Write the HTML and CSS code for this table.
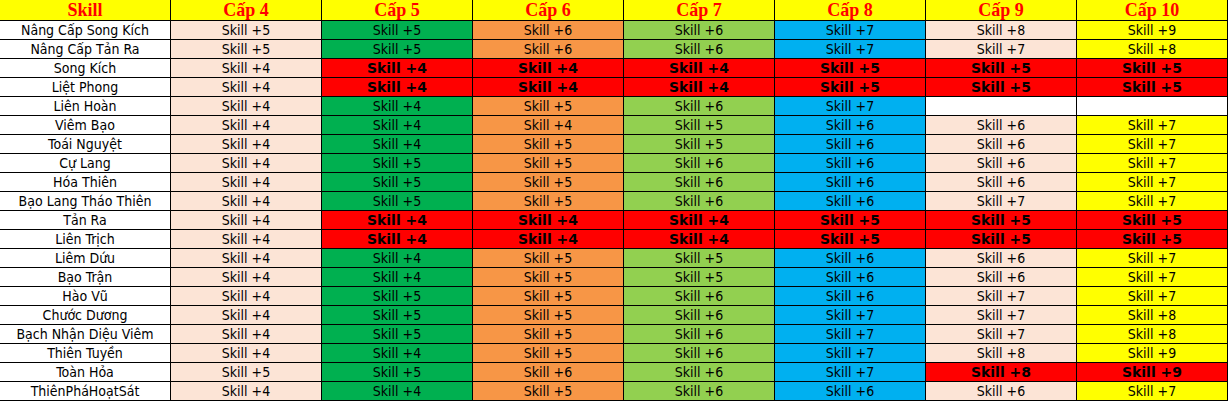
FILE: index.html
```html
<!DOCTYPE html>
<html lang="vi">
<head>
<meta charset="utf-8">
<title>Skill</title>
<link rel="stylesheet" href="styles.css">
</head>
<body>
<div class="sheet">
  <div class="hd">Skill</div><div class="hd">Cấp 4</div><div class="hd">Cấp 5</div><div class="hd">Cấp 6</div><div class="hd">Cấp 7</div><div class="hd">Cấp 8</div><div class="hd">Cấp 9</div><div class="hd">Cấp 10</div>

  <div class="nm">Nâng Cấp Song Kích</div><div class="c c4">Skill +5</div><div class="c c5">Skill +5</div><div class="c c6">Skill +6</div><div class="c c7">Skill +6</div><div class="c c8">Skill +7</div><div class="c c9">Skill +8</div><div class="c c10">Skill +9</div>
  <div class="nm">Nâng Cấp Tản Ra</div><div class="c c4">Skill +5</div><div class="c c5">Skill +5</div><div class="c c6">Skill +6</div><div class="c c7">Skill +6</div><div class="c c8">Skill +7</div><div class="c c9">Skill +7</div><div class="c c10">Skill +8</div>
  <div class="nm">Song Kích</div><div class="c c4">Skill +4</div><div class="c hot">Skill +4</div><div class="c hot">Skill +4</div><div class="c hot">Skill +4</div><div class="c hot">Skill +5</div><div class="c hot">Skill +5</div><div class="c hot">Skill +5</div>
  <div class="nm">Liệt Phong</div><div class="c c4">Skill +4</div><div class="c hot">Skill +4</div><div class="c hot">Skill +4</div><div class="c hot">Skill +4</div><div class="c hot">Skill +5</div><div class="c hot">Skill +5</div><div class="c hot">Skill +5</div>
  <div class="nm">Liên Hoàn</div><div class="c c4">Skill +4</div><div class="c c5">Skill +4</div><div class="c c6">Skill +5</div><div class="c c7">Skill +6</div><div class="c c8">Skill +7</div><div class="c blank"></div><div class="c blank"></div>
  <div class="nm">Viêm Bạo</div><div class="c c4">Skill +4</div><div class="c c5">Skill +4</div><div class="c c6">Skill +4</div><div class="c c7">Skill +5</div><div class="c c8">Skill +6</div><div class="c c9">Skill +6</div><div class="c c10">Skill +7</div>
  <div class="nm">Toái Nguyệt</div><div class="c c4">Skill +4</div><div class="c c5">Skill +4</div><div class="c c6">Skill +5</div><div class="c c7">Skill +5</div><div class="c c8">Skill +6</div><div class="c c9">Skill +6</div><div class="c c10">Skill +7</div>
  <div class="nm">Cự Lang</div><div class="c c4">Skill +4</div><div class="c c5">Skill +5</div><div class="c c6">Skill +5</div><div class="c c7">Skill +6</div><div class="c c8">Skill +6</div><div class="c c9">Skill +6</div><div class="c c10">Skill +7</div>
  <div class="nm">Hóa Thiên</div><div class="c c4">Skill +4</div><div class="c c5">Skill +5</div><div class="c c6">Skill +5</div><div class="c c7">Skill +6</div><div class="c c8">Skill +6</div><div class="c c9">Skill +6</div><div class="c c10">Skill +7</div>
  <div class="nm">Bạo Lang Tháo Thiên</div><div class="c c4">Skill +4</div><div class="c c5">Skill +5</div><div class="c c6">Skill +5</div><div class="c c7">Skill +6</div><div class="c c8">Skill +6</div><div class="c c9">Skill +7</div><div class="c c10">Skill +7</div>
  <div class="nm">Tản Ra</div><div class="c c4">Skill +4</div><div class="c hot">Skill +4</div><div class="c hot">Skill +4</div><div class="c hot">Skill +4</div><div class="c hot">Skill +5</div><div class="c hot">Skill +5</div><div class="c hot">Skill +5</div>
  <div class="nm">Liên Trịch</div><div class="c c4">Skill +4</div><div class="c hot">Skill +4</div><div class="c hot">Skill +4</div><div class="c hot">Skill +4</div><div class="c hot">Skill +5</div><div class="c hot">Skill +5</div><div class="c hot">Skill +5</div>
  <div class="nm">Liêm Dứu</div><div class="c c4">Skill +4</div><div class="c c5">Skill +4</div><div class="c c6">Skill +5</div><div class="c c7">Skill +5</div><div class="c c8">Skill +6</div><div class="c c9">Skill +6</div><div class="c c10">Skill +7</div>
  <div class="nm">Bạo Trận</div><div class="c c4">Skill +4</div><div class="c c5">Skill +4</div><div class="c c6">Skill +5</div><div class="c c7">Skill +5</div><div class="c c8">Skill +6</div><div class="c c9">Skill +6</div><div class="c c10">Skill +7</div>
  <div class="nm">Hào Vũ</div><div class="c c4">Skill +4</div><div class="c c5">Skill +5</div><div class="c c6">Skill +5</div><div class="c c7">Skill +6</div><div class="c c8">Skill +6</div><div class="c c9">Skill +7</div><div class="c c10">Skill +7</div>
  <div class="nm">Chước Dương</div><div class="c c4">Skill +4</div><div class="c c5">Skill +5</div><div class="c c6">Skill +5</div><div class="c c7">Skill +6</div><div class="c c8">Skill +7</div><div class="c c9">Skill +7</div><div class="c c10">Skill +8</div>
  <div class="nm">Bạch Nhận Diệu Viêm</div><div class="c c4">Skill +4</div><div class="c c5">Skill +5</div><div class="c c6">Skill +5</div><div class="c c7">Skill +6</div><div class="c c8">Skill +7</div><div class="c c9">Skill +7</div><div class="c c10">Skill +8</div>
  <div class="nm">Thiên Tuyền</div><div class="c c4">Skill +4</div><div class="c c5">Skill +4</div><div class="c c6">Skill +5</div><div class="c c7">Skill +6</div><div class="c c8">Skill +7</div><div class="c c9">Skill +8</div><div class="c c10">Skill +9</div>
  <div class="nm">Toàn Hỏa</div><div class="c c4">Skill +5</div><div class="c c5">Skill +5</div><div class="c c6">Skill +6</div><div class="c c7">Skill +6</div><div class="c c8">Skill +7</div><div class="c hot">Skill +8</div><div class="c hot">Skill +9</div>
  <div class="nm">ThiênPháHoạtSát</div><div class="c c4">Skill +4</div><div class="c c5">Skill +4</div><div class="c c6">Skill +5</div><div class="c c7">Skill +6</div><div class="c c8">Skill +6</div><div class="c c9">Skill +6</div><div class="c c10">Skill +7</div>
</div>
</body>
</html>
```

FILE: styles.css
```css
html, body {
  margin: 0;
  padding: 0;
  background: #ffffff;
}

.sheet {
  display: grid;
  grid-template-columns: 170px repeat(7, 150px);
  grid-template-rows: 20px repeat(20, 18px);
  gap: 1px;
  padding: 0 1px 1px 0;
  width: max-content;
  background: #000000;
  font-family: "DejaVu Sans Condensed", "DejaVu Sans", sans-serif;
  font-stretch: condensed;
  font-size: 14px;
  color: #000000;
}

.sheet > div {
  display: flex;
  align-items: center;
  justify-content: center;
  white-space: nowrap;
  overflow: hidden;
  line-height: 1;
}

.hd {
  background: #ffff00;
  color: #ff0000;
  font-family: "Liberation Serif", serif;
  font-stretch: normal;
  font-weight: bold;
  font-size: 18px;
}

.nm {
  background: #ffffff;
}

.c4, .c9 { background: #fce4d6; }
.c5 { background: #00b050; }
.c6 { background: #f79646; }
.c7 { background: #92d050; }
.c8 { background: #00b0f0; }
.c10 { background: #ffff00; }
.blank { background: #ffffff; }

.hot {
  background: #ff0000;
  font-family: "DejaVu Sans", sans-serif;
  font-stretch: normal;
  font-weight: bold;
  font-size: 14px;
}
```
